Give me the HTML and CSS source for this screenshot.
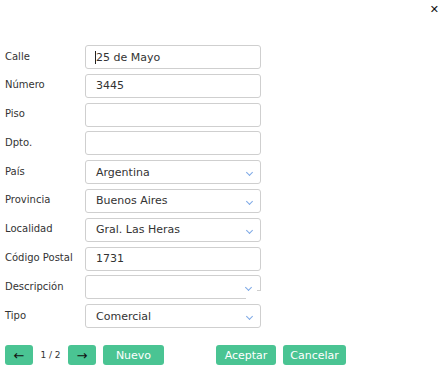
FILE: index.html
```html
<!DOCTYPE html>
<html lang="es">
<head>
  <meta charset="UTF-8">
  <title>Domicilio</title>
  <link rel="stylesheet" href="styles.css">
</head>
<body>
<div class="dialog">
  <div class="topbar">
    <span class="close">&#x2715;</span>
  </div>
  <form class="fields">
    <label class="lbl">Calle</label>
    <div class="box"><span class="caret"></span>25 de Mayo</div>
    <label class="lbl">Número</label>
    <div class="box">3445</div>
    <label class="lbl">Piso</label>
    <div class="box"></div>
    <label class="lbl">Dpto.</label>
    <div class="box"></div>
    <label class="lbl">País</label>
    <div class="box select">Argentina<span class="chev"></span></div>
    <label class="lbl">Provincia</label>
    <div class="box select">Buenos Aires<span class="chev"></span></div>
    <label class="lbl">Localidad</label>
    <div class="box select">Gral. Las Heras<span class="chev"></span></div>
    <label class="lbl">Código Postal</label>
    <div class="box">1731</div>
    <label class="lbl">Descripción</label>
    <div class="box select desc"><span class="chev"></span></div>
    <label class="lbl">Tipo</label>
    <div class="box select">Comercial<span class="chev"></span></div>
  </form>
  <div class="actions">
    <button class="btn arrow">&#x2190;</button>
    <span class="pager">1 / 2</span>
    <button class="btn arrow">&#x2192;</button>
    <button class="btn nuevo">Nuevo</button>
    <button class="btn accept">Aceptar</button>
    <button class="btn cancel">Cancelar</button>
  </div>
</div>
</body>
</html>
```

FILE: styles.css
```css
html {
    --text: #333333;
    --border: #cfcfcf;
    --green: #4ac493;
    --chev: #7ea9e6;
}

body {
    margin: 0;
    font-family: "DejaVu Sans", sans-serif;
    color: var(--text);
    background: #ffffff;
}

.dialog {
    width: 447px;
}

.topbar {
    display: flex;
    justify-content: flex-end;
    height: 45px;
}
.close {
    font-size: 11px;
    font-weight: bold;
    color: #111;
    margin: 3px 8px 0 0;
}

.fields {
    display: grid;
    grid-template-columns: 80px 176px;
    row-gap: 4.8px;
    padding-left: 5px;
}

.lbl {
    font-size: 10px;
    display: flex;
    align-items: center;
    padding-bottom: 2px;
}

.box {
    position: relative;
    box-sizing: border-box;
    height: 24px;
    border: 1px solid var(--border);
    border-radius: 3px;
    padding: 0 10px;
    font-size: 11px;
    display: flex;
    align-items: center;
}

.caret {
    width: 1px;
    height: 13px;
    background: #222;
    margin-left: -1px;
}

.chev {
    position: absolute;
    right: 8px;
    top: 9px;
    width: 4px;
    height: 4px;
    border-right: 1.2px solid var(--chev);
    border-bottom: 1.2px solid var(--chev);
    transform: rotate(45deg);
}

.desc {
    border-bottom-right-radius: 0;
}
.desc .chev {
    right: 9px;
}
.desc::after {
    content: "";
    position: absolute;
    right: -1px;
    bottom: -1px;
    width: 15px;
    height: 8px;
    background: #ffffff;
}
.desc::before {
    content: "";
    position: absolute;
    right: -1px;
    bottom: 7px;
    width: 4px;
    height: 1px;
    background: var(--border);
    z-index: 1;
}

.actions {
    display: flex;
    align-items: center;
    padding: 17px 0 0 5px;
}

.btn {
    height: 20px;
    border: 0;
    border-radius: 3px;
    background: var(--green);
    color: #ffffff;
    font-family: "DejaVu Sans", sans-serif;
    font-size: 11px;
    padding: 0;
}
.arrow {
    width: 28px;
    color: #111;
    font-size: 13px;
}
.pager {
    font-size: 9px;
    width: 35px;
    text-align: center;
}
.nuevo {
    width: 61px;
    margin-left: 7px;
}
.accept {
    width: 60px;
    margin-left: 52px;
}
.cancel {
    width: 63px;
    margin-left: 7px;
}
```
